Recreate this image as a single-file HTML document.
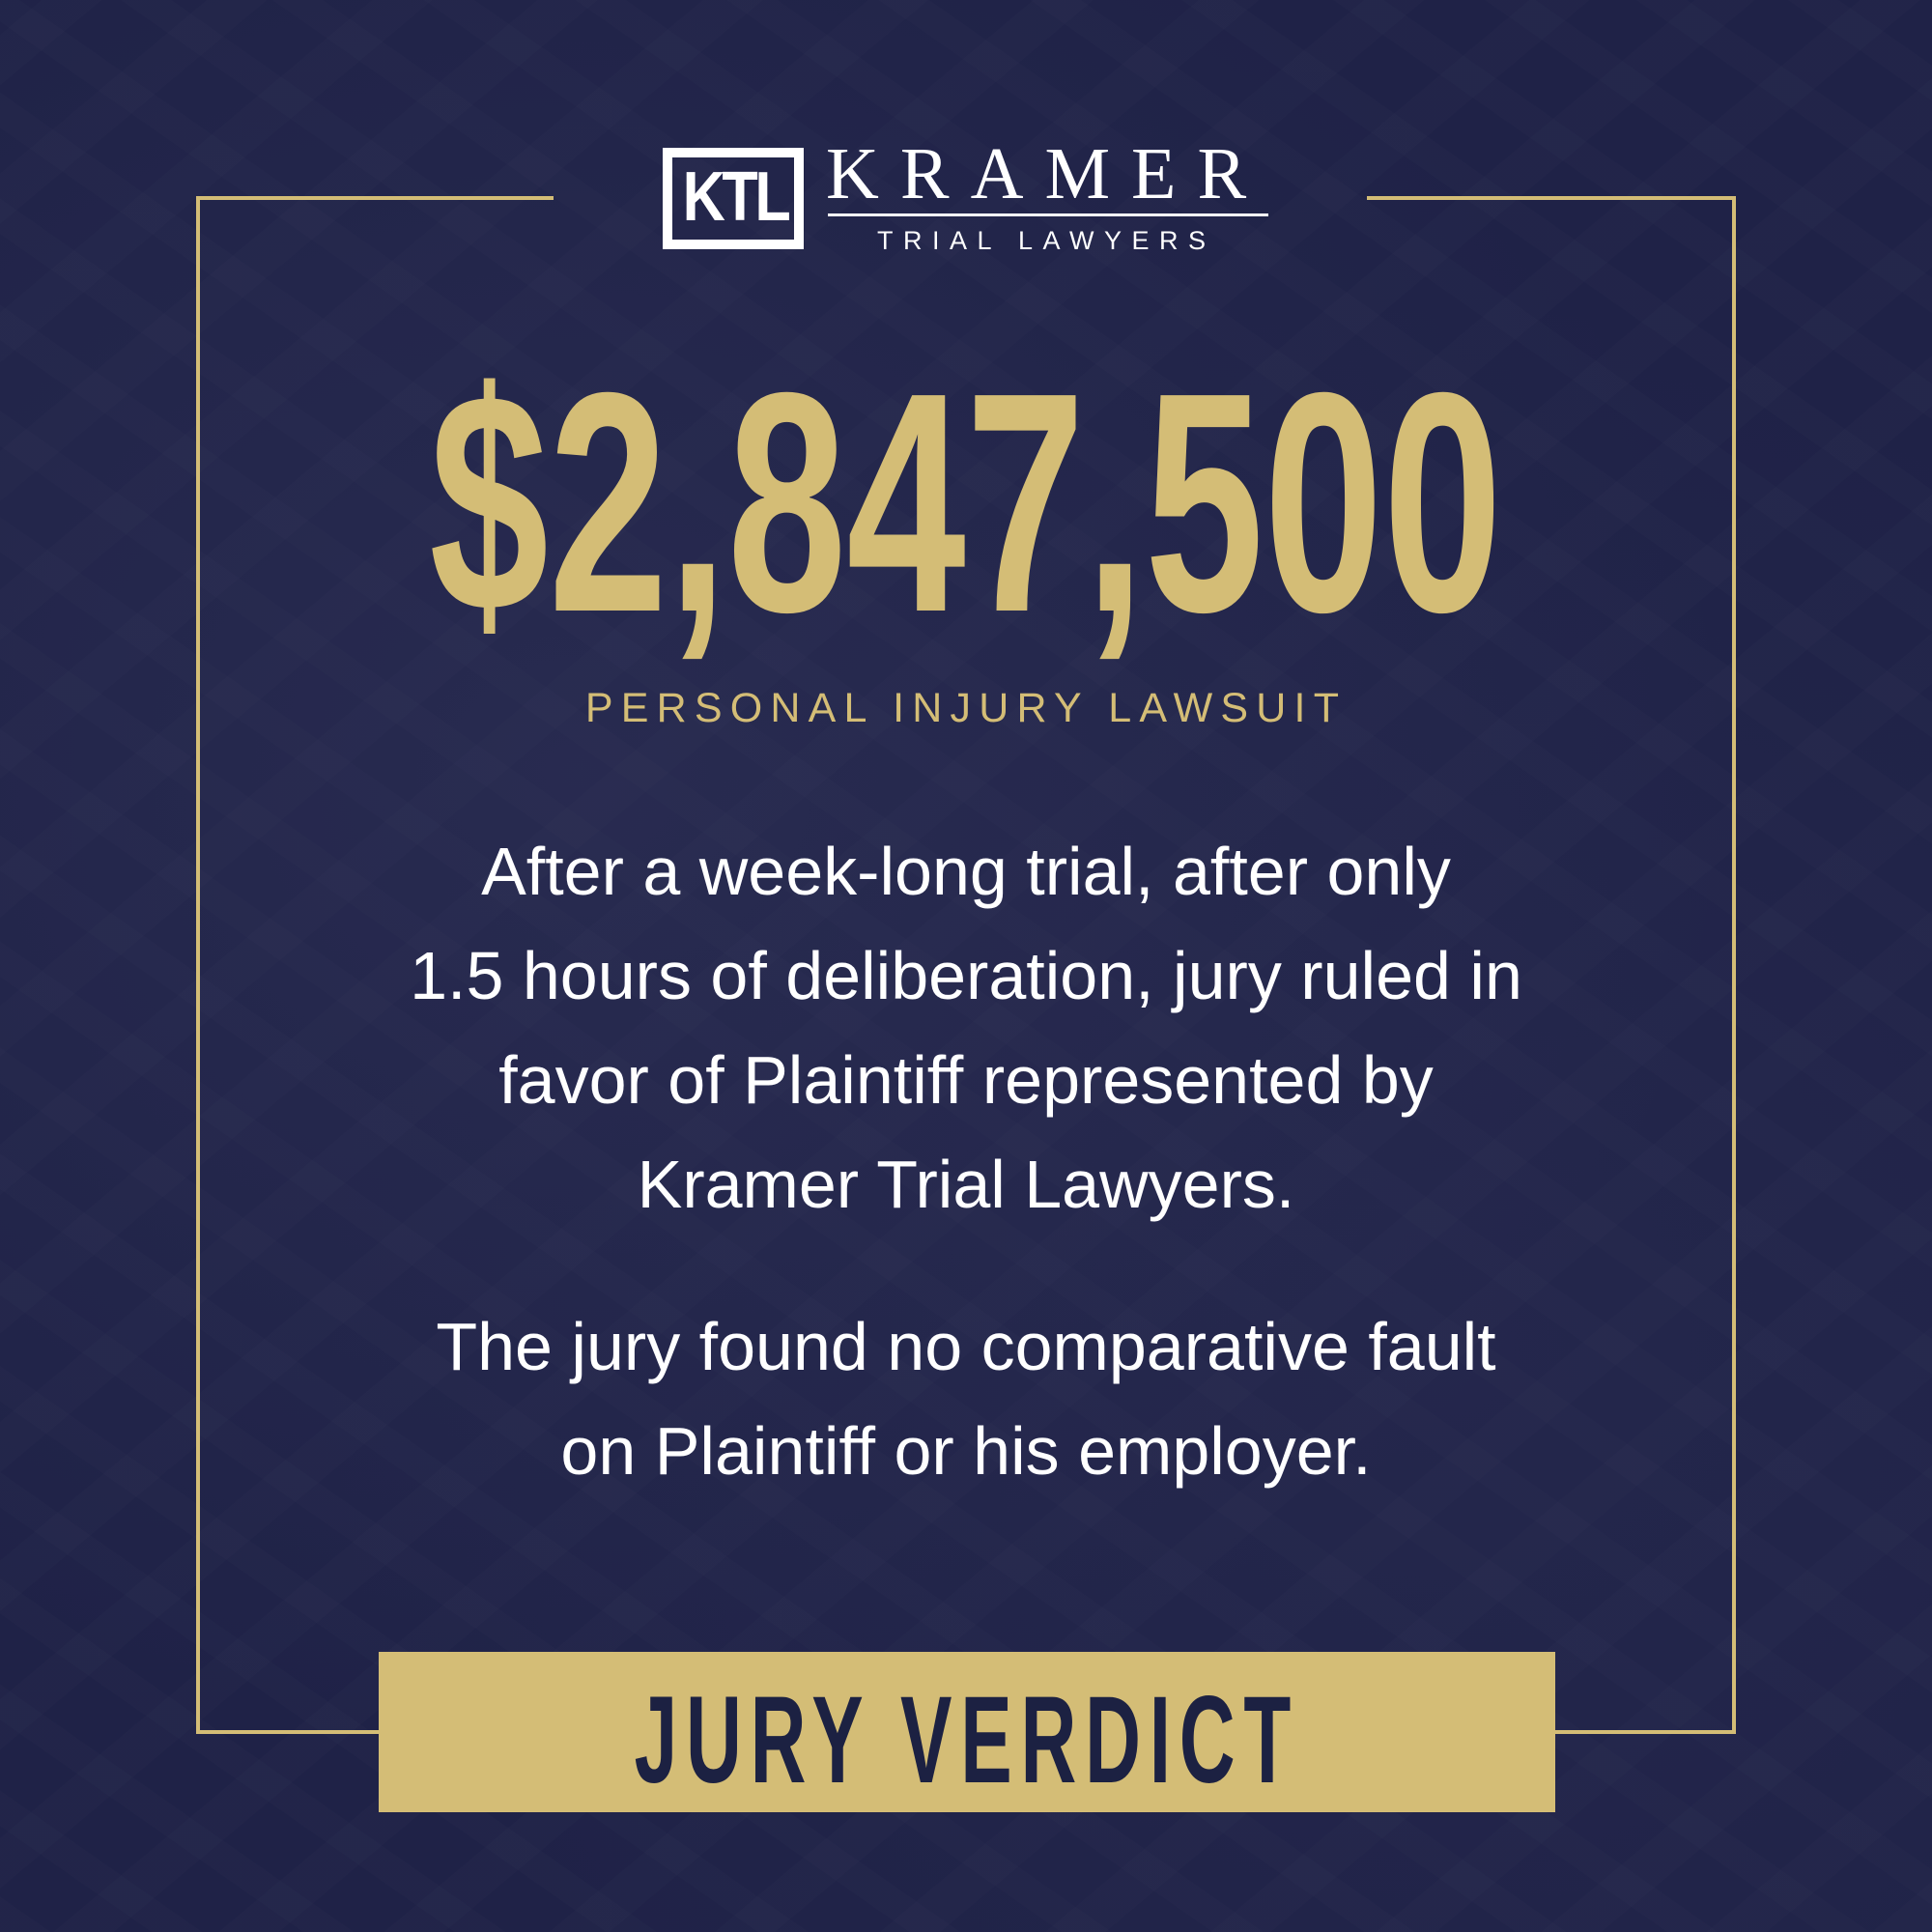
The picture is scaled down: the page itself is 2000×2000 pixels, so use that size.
<!DOCTYPE html>
<html><head><meta charset="utf-8"><style>
html,body{margin:0;padding:0}
body{width:2000px;height:2000px;position:relative;overflow:hidden;background:#1f2247;font-family:"Liberation Sans",sans-serif}
.bg{position:absolute;inset:0;background:
radial-gradient(ellipse at 30% 40%,rgba(60,62,100,.3),transparent 60%),
radial-gradient(ellipse at 75% 70%,rgba(50,52,90,.25),transparent 55%),
repeating-linear-gradient(35deg,rgba(255,255,255,.012) 0 30px,transparent 30px 90px),
repeating-linear-gradient(-40deg,rgba(255,255,255,.012) 0 40px,transparent 40px 110px);}
.ln{position:absolute;background:#d4bd76}
.abs{position:absolute}
.amt{position:absolute;left:0;width:2000px;top:358px;text-align:center;color:#d4bd76;font-weight:bold;font-size:324px;line-height:324px;}
.amt span{display:inline-block;transform:scaleX(.685);transform-origin:center}
.sub{position:absolute;left:0;width:2000px;top:708px;text-align:center;color:#d4bd76;font-size:43px;letter-spacing:8.2px;line-height:50px}
.p{position:absolute;left:0;width:2000px;text-align:center;color:#fff;font-size:70px;line-height:108px;font-weight:300}
.bar{position:absolute;left:392px;top:1710px;width:1218px;height:166px;background:#d4bd76}
.bar span{position:absolute;left:0;width:100%;top:28px;text-align:center;font-weight:bold;font-size:128px;line-height:128px;color:#1c2142;letter-spacing:14px}
.bar span i{font-style:normal;display:inline-block;transform:scaleX(.626)}
</style></head><body>
<div class="bg"></div>
<div class="ln" style="left:205px;top:203px;width:368px;height:4px"></div>
<div class="ln" style="left:1415px;top:203px;width:382px;height:4px"></div>
<div class="ln" style="left:203px;top:203px;width:4px;height:1592px"></div>
<div class="ln" style="left:1793px;top:203px;width:4px;height:1592px"></div>
<div class="ln" style="left:203px;top:1791px;width:1594px;height:4px"></div>

<div class="abs" style="left:686px;top:153px;width:126px;height:85px;border:10px solid #fff"></div>
<div class="abs" style="left:696px;top:168px;width:130px;text-align:center;color:#fff;font-weight:bold;font-size:72px;line-height:72px;letter-spacing:-4px"><span style="display:inline-block;transform:scaleX(.85)">KTL</span></div>
<div class="abs" style="left:855px;top:142px;width:460px;color:#fff;font-family:'Liberation Serif',serif;font-size:76px;line-height:76px;letter-spacing:22px">KRAMER</div>
<div class="abs" style="left:857px;top:221px;width:456px;height:3px;background:#fff"></div>
<div class="abs" style="left:908px;top:234px;width:370px;color:#fff;font-size:27px;line-height:30px;letter-spacing:10.5px">TRIAL LAWYERS</div>

<div class="amt"><span>$2,847,500</span></div>
<div class="sub">PERSONAL INJURY LAWSUIT</div>
<div class="p" style="top:848px">After a week-long trial, after only<br>1.5 hours of deliberation, jury ruled in<br>favor of Plaintiff represented by<br>Kramer Trial Lawyers.</div>
<div class="p" style="top:1340px">The jury found no comparative fault<br>on Plaintiff or his employer.</div>
<div class="bar"><span><i>JURY VERDICT</i></span></div>
</body></html>
